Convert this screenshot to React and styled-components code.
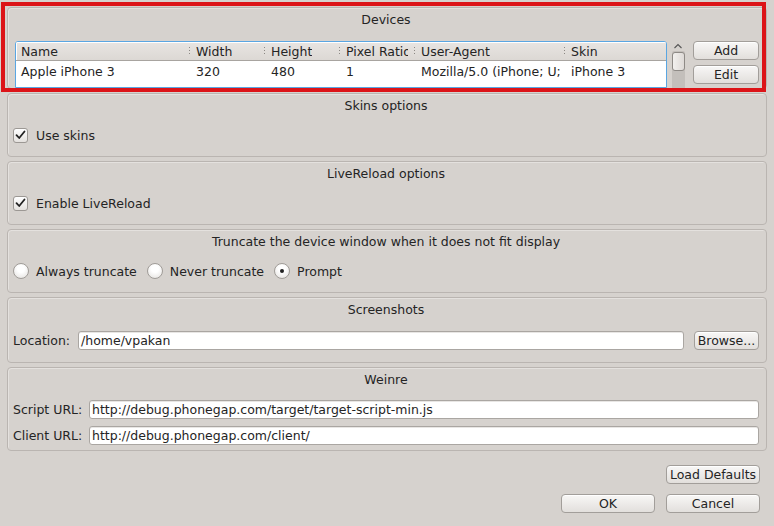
import React from 'react';
import styled, { createGlobalStyle } from 'styled-components';

const GlobalStyle = createGlobalStyle`
  html, body {
    margin: 0;
    padding: 0;
    background: #d6d2ce;
  }
  body {
    font-family: "DejaVu Sans", "Liberation Sans", sans-serif;
    font-size: 12.5px;
    color: #242424;
  }
`;

const Window = styled.div`
  width: 774px;
  height: 526px;
  box-sizing: border-box;
  padding: 7px 7px 0 7px;
  display: flex;
  flex-direction: column;
  overflow: hidden;
`;

const Groups = styled.div`
  display: flex;
  flex-direction: column;
  gap: 4px;
`;

const Group = styled.div`
  position: relative;
  box-sizing: border-box;
  height: ${p => p.h}px;
  border: 1px solid #bab5b1;
  border-radius: 4px;
  box-shadow: inset 1px 1px 0 #e4e1de;
  padding: 5px 7px 0 5px;
  display: flex;
  flex-direction: column;
`;

const Title = styled.div`
  line-height: 14px;
  height: 14px;
  text-align: center;
  white-space: nowrap;
`;

const Content = styled.div`
  margin-top: ${p => p.mt || 12}px;
  display: flex;
  flex-direction: column;
  gap: ${p => p.gap || 0}px;
`;

const Row = styled.div`
  display: flex;
  align-items: center;
  height: 20px;
  gap: ${p => p.gap || 0}px;
`;

/* annotation frame drawn over the devices box */
const RedFrame = styled.div`
  position: absolute;
  left: -7px;
  top: -6px;
  width: 765px;
  height: 90px;
  box-sizing: border-box;
  border: 4px solid #dc1418;
  pointer-events: none;
  z-index: 5;
`;

const DevicesBody = styled.div`
  margin-top: 14px;
  display: flex;
  align-items: flex-start;
  margin-left: 2px;
`;

const Table = styled.div`
  width: 653px;
  height: 47px;
  box-sizing: border-box;
  border: 1px solid #5aa6e2;
  border-radius: 3px 3px 0 0;
  background: #fff;
  overflow: hidden;
`;

const cols = '174px 75px 75px 75px 150px 102px';

const HeaderRow = styled.div`
  display: grid;
  grid-template-columns: ${cols};
  height: 18px;
  background: linear-gradient(#e8e5e2, #dcd8d4);
  border-bottom: 1px solid #a8a4a0;
  box-shadow: inset 1px 1px 0 #fff;
`;

const HeadCell = styled.div`
  position: relative;
  display: flex;
  align-items: center;
  padding-left: ${p => (p.first ? 5 : 6)}px;
  padding-right: 7px;
  white-space: nowrap;
  min-width: 0;
  & > span {
    min-width: 0;
    overflow: hidden;
  }
  &::after {
    content: '';
    position: absolute;
    right: 0;
    top: 5px;
    width: 1px;
    height: 9px;
    background: repeating-linear-gradient(to bottom, #8c8884 0 1px, transparent 1px 3px);
  }
`;

const DataRow = styled.div`
  display: grid;
  grid-template-columns: ${cols};
  height: 20px;
`;

const Cell = styled.div`
  display: flex;
  align-items: center;
  padding-left: ${p => (p.first ? 5 : 6)}px;
  white-space: nowrap;
  overflow: hidden;
`;

const ScrollBar = styled.div`
  width: 14px;
  height: 48px;
  margin-left: 4px;
  margin-top: -1px;
  display: flex;
  flex-direction: column;
  align-items: center;
`;

const ScrollArrow = styled.div`
  height: 11px;
  width: 14px;
  display: flex;
  align-items: center;
  justify-content: center;
`;

const Track = styled.div`
  flex: 1;
  width: 13px;
  background: #c3bfbb;
  border-radius: 2px 2px 0 0;
`;

const Handle = styled.div`
  height: 19px;
  box-sizing: border-box;
  border: 1px solid #8e8a86;
  border-radius: 3px;
  background: linear-gradient(to right, #f2f0ee, #dedad7);
  margin-top: 1px;
`;

const SideButtons = styled.div`
  margin-left: 8px;
  display: flex;
  flex-direction: column;
  gap: 5px;
`;

const Button = styled.button`
  font: inherit;
  color: #242424;
  width: ${p => p.w}px;
  height: 19px;
  padding: 0;
  box-sizing: border-box;
  border: 1px solid #a29e9a;
  border-radius: 4px;
  background: linear-gradient(#f8f7f6, #e2dfdc);
  box-shadow: inset 0 1px 0 #fff;
  line-height: 17px;
  text-align: center;
  white-space: nowrap;
  margin-left: ${p => p.ml || 0}px;
`;

const CheckBox = styled.span`
  width: 15px;
  height: 15px;
  box-sizing: border-box;
  border: 1px solid #9c9894;
  border-radius: 3px;
  background: linear-gradient(#ffffff, #e4e1de);
  display: inline-flex;
  align-items: center;
  justify-content: center;
  margin-right: 8px;
`;

const Radio = styled.span`
  width: 16px;
  height: 16px;
  box-sizing: border-box;
  border: 1px solid #a09c98;
  border-radius: 50%;
  background: radial-gradient(circle at 50% 35%, #ffffff 30%, #e2dfdc);
  display: inline-flex;
  align-items: center;
  justify-content: center;
  margin-right: 7px;
  &::after {
    content: '';
    width: 4px;
    height: 4px;
    border-radius: 50%;
    background: ${p => (p.checked ? '#222' : 'transparent')};
  }
`;

const Option = styled.label`
  display: inline-flex;
  align-items: center;
  margin-right: ${p => p.mr || 0}px;
`;

const Label = styled.span`
  width: ${p => p.w}px;
  white-space: nowrap;
`;

const Input = styled.div`
  flex: 1;
  height: 19px;
  box-sizing: border-box;
  border: 1px solid #aaa6a2;
  border-radius: 3px;
  background: #fff;
  box-shadow: inset 0 1px 0 #e8e6e4;
  padding-left: 2px;
  line-height: 17px;
  white-space: nowrap;
  overflow: hidden;
`;

const Footer = styled.div`
  margin-top: 14px;
  padding-right: 7px;
  display: flex;
  flex-direction: column;
  align-items: flex-end;
  gap: 10px;
`;

const FooterRow = styled.div`
  display: flex;
  gap: 11px;
`;

const Check = () => (
  <svg width="11" height="10" viewBox="0 0 11 10">
    <path d="M1.5 5.2 L4.2 8 L9.5 1.5" fill="none" stroke="#222" strokeWidth="1.8" strokeLinecap="round" strokeLinejoin="round" />
  </svg>
);

const UpArrow = () => (
  <svg width="10" height="6" viewBox="0 0 10 6">
    <path d="M1.5 5 L5 1.5 L8.5 5" fill="none" stroke="#555" strokeWidth="1.1" />
  </svg>
);

const headers = ['Name', 'Width', 'Height', 'Pixel Ratio', 'User-Agent', 'Skin'];
const device = ['Apple iPhone 3', '320', '480', '1', 'Mozilla/5.0 (iPhone; U;', 'iPhone 3'];

export default function App() {
  return (
    <>
      <GlobalStyle />
      <Window>
        <Groups>
          <Group h={82}>
            <RedFrame />
            <Title>Devices</Title>
            <DevicesBody>
              <Table>
                <HeaderRow>
                  {headers.map((h, i) => (
                    <HeadCell key={h} first={i === 0}><span>{h}</span></HeadCell>
                  ))}
                </HeaderRow>
                <DataRow>
                  {device.map((d, i) => (
                    <Cell key={i} first={i === 0}>{d}</Cell>
                  ))}
                </DataRow>
              </Table>
              <ScrollBar>
                <ScrollArrow><UpArrow /></ScrollArrow>
                <Track>
                  <Handle />
                </Track>
              </ScrollBar>
              <SideButtons>
                <Button w={66}>Add</Button>
                <Button w={66}>Edit</Button>
              </SideButtons>
            </DevicesBody>
          </Group>

          <Group h={64}>
            <Title>Skins options</Title>
            <Content>
              <Row>
                <Option><CheckBox><Check /></CheckBox>Use skins</Option>
              </Row>
            </Content>
          </Group>

          <Group h={64}>
            <Title>LiveReload options</Title>
            <Content>
              <Row>
                <Option><CheckBox><Check /></CheckBox>Enable LiveReload</Option>
              </Row>
            </Content>
          </Group>

          <Group h={64}>
            <Title>Truncate the device window when it does not fit display</Title>
            <Content>
              <Row>
                <Option mr={10}><Radio />Always truncate</Option>
                <Option mr={10}><Radio />Never truncate</Option>
                <Option><Radio checked />Prompt</Option>
              </Row>
            </Content>
          </Group>

          <Group h={66}>
            <Title>Screenshots</Title>
            <Content mt={13}>
              <Row>
                <Label w={65}>Location:</Label>
                <Input>/home/vpakan</Input>
                <Button w={65} ml={10}>Browse...</Button>
              </Row>
            </Content>
          </Group>

          <Group h={84}>
            <Title>Weinre</Title>
            <Content mt={12} gap={6}>
              <Row>
                <Label w={76}>Script URL:</Label>
                <Input>http://debug.phonegap.com/target/target-script-min.js</Input>
              </Row>
              <Row>
                <Label w={76}>Client URL:</Label>
                <Input>http://debug.phonegap.com/client/</Input>
              </Row>
            </Content>
          </Group>
        </Groups>

        <Footer>
          <Button w={94}>Load Defaults</Button>
          <FooterRow>
            <Button w={94}>OK</Button>
            <Button w={94}>Cancel</Button>
          </FooterRow>
        </Footer>
      </Window>
    </>
  );
}
